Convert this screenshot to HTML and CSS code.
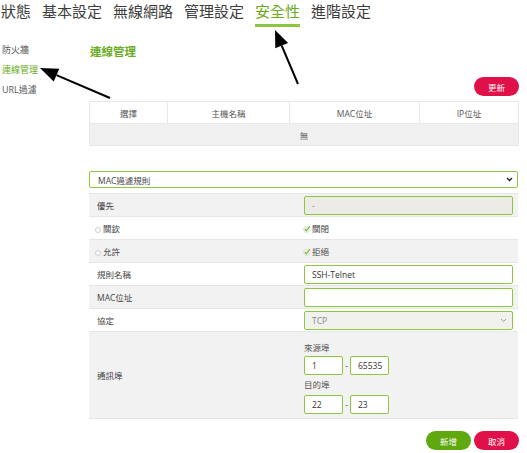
FILE: index.html
```html
<!DOCTYPE html>
<html lang="zh-Hant">
<head>
<meta charset="utf-8">
<title>連線管理</title>
<link rel="stylesheet" href="styles.css">
</head>
<body>
<div class="page">
  <nav class="topnav">
    <a class="nav-item">狀態</a>
    <a class="nav-item">基本設定</a>
    <a class="nav-item">無線網路</a>
    <a class="nav-item">管理設定</a>
    <a class="nav-item active">安全性</a>
    <a class="nav-item">進階設定</a>
  </nav>
  <div class="main">
    <aside class="sidebar">
      <div class="side-item">防火牆</div>
      <div class="side-item active">連線管理</div>
      <div class="side-item">URL過濾</div>
    </aside>
    <section class="content">
      <h2 class="title">連線管理</h2>
      <div class="toolbar"><button class="btn btn-red">更新</button></div>
      <table class="list">
        <colgroup><col class="c1"><col class="c2"><col class="c3"><col class="c4"></colgroup>
        <tr><th>選擇</th><th>主機名稱</th><th>MAC位址</th><th>IP位址</th></tr>
        <tr><td class="empty" colspan="4">無</td></tr>
      </table>
      <div class="select-box">
        <span>MAC過濾規則</span>
        <svg class="chev" width="7" height="5" viewBox="0 0 7 5"><path d="M1 1 L3.5 3.5 L6 1" fill="none" stroke="#222" stroke-width="1.4"/></svg>
      </div>
      <table class="form">
        <colgroup><col class="fl"><col class="fv"></colgroup>
        <tr class="g"><td class="lbl">優先</td><td class="val"><div class="field disabled">-</div></td></tr>
        <tr class="w"><td class="lbl rad"><span class="radio"></span>關欽</td><td class="val opt"><svg class="check" width="8" height="8" viewBox="0 0 8 8"><circle cx="3.6" cy="4.4" r="3.1" fill="#f0f0f0" stroke="#d4d4d4" stroke-width="0.6"/><path d="M1.8 4.2 L3.3 5.8 L6.8 1.2" fill="none" stroke="#7cbd2e" stroke-width="1.2"/></svg>關閉</td></tr>
        <tr class="g"><td class="lbl rad"><span class="radio"></span>允許</td><td class="val opt"><svg class="check" width="8" height="8" viewBox="0 0 8 8"><circle cx="3.6" cy="4.4" r="3.1" fill="#f0f0f0" stroke="#d4d4d4" stroke-width="0.6"/><path d="M1.8 4.2 L3.3 5.8 L6.8 1.2" fill="none" stroke="#7cbd2e" stroke-width="1.2"/></svg>拒絕</td></tr>
        <tr class="w"><td class="lbl">規則名稱</td><td class="val"><div class="field">SSH-Telnet</div></td></tr>
        <tr class="g"><td class="lbl">MAC位址</td><td class="val"><div class="field"></div></td></tr>
        <tr class="w"><td class="lbl">協定</td><td class="val"><div class="field disabled sel"><span>TCP</span><svg width="7" height="5" viewBox="0 0 7 5"><path d="M1 1 L3.5 3.5 L6 1" fill="none" stroke="#999" stroke-width="1"/></svg></div></td></tr>
        <tr class="g tall"><td class="lbl">通訊埠</td><td class="val">
          <div class="ports">
            <div class="port-label">來源埠</div>
            <div class="port-row"><div class="field port">1</div><span class="dash">-</span><div class="field port">65535</div></div>
            <div class="port-label second">目的埠</div>
            <div class="port-row"><div class="field port">22</div><span class="dash">-</span><div class="field port">23</div></div>
          </div>
        </td></tr>
      </table>
      <div class="actions">
        <button class="btn btn-green">新增</button>
        <button class="btn btn-red">取消</button>
      </div>
    </section>
  </div>
  <svg class="annot" width="527" height="453" viewBox="0 0 527 453">
    <line x1="56.5" y1="75.1" x2="110" y2="98" stroke="#000" stroke-width="2"/>
    <polygon points="40,68 59.3,68.7 53.7,81.5" fill="#000"/>
    <line x1="281.7" y1="45.6" x2="298" y2="84" stroke="#000" stroke-width="2"/>
    <polygon points="275,30 288.1,42.9 275.3,48.3" fill="#000"/>
  </svg>
</div>
</body>
</html>
```
FILE: styles.css
```css
* { box-sizing: border-box; }
body {
  margin: 0;
  font-family: "Open Sans", "Noto Sans CJK TC", sans-serif;
  color: #444;
  background: #fff;
}
.page {
  position: relative;
  width: 527px;
  height: 453px;
  overflow: hidden;
}
.topnav {
  display: flex;
  gap: 11px;
  padding-left: 1px;
  height: 27px;
}
.nav-item {
  font-size: 15px;
  line-height: 22px;
  padding-bottom: 2px;
  color: #3d3d3d;
  border-bottom: 3px solid transparent;
}
.nav-item.active {
  color: #6aab22;
  border-bottom-color: #8dc63f;
}
.main { display: flex; }
.sidebar {
  width: 89px;
  padding-top: 13px;
  padding-left: 2px;
  font-size: 9px;
  line-height: 20px;
  color: #555;
}
.side-item.active { color: #6aab22; }
.content {
  width: 429px;
  padding-top: 17px;
}
.title {
  margin: 0 0 17px 1px;
  font-size: 11.5px;
  line-height: 16px;
  font-weight: bold;
  color: #6aab22;
}
.toolbar {
  display: flex;
  justify-content: flex-end;
  margin-right: -1px;
  margin-bottom: 5px;
}
.btn {
  width: 45px;
  height: 19px;
  border: 0;
  border-radius: 10px;
  padding: 0;
  color: #fff;
  font-family: "Open Sans", "Noto Sans CJK TC", sans-serif;
  font-size: 8.5px;
}
.btn-red { background: #e01048; }
.btn-green { background: #5fa80f; }
.list {
  width: 429px;
  border-collapse: collapse;
  table-layout: fixed;
}
.list .c1 { width: 78px; }
.list .c2 { width: 122px; }
.list .c3 { width: 130px; }
.list .c4 { width: 99px; }
.list th {
  height: 22px;
  padding: 0;
  border: 1px solid #e8e8e8;
  background: #fff;
  font-weight: normal;
  font-size: 8.5px;
  color: #555;
}
.list td.empty {
  height: 22px;
  padding: 0;
  border: 1px solid #e8e8e8;
  background: #f0f0f0;
  text-align: center;
  font-size: 8.5px;
  color: #555;
}
.select-box {
  margin-top: 25px;
  height: 17px;
  border: 1px solid #8dc63f;
  border-radius: 2px;
  display: flex;
  align-items: center;
  justify-content: space-between;
  padding: 0 4px 0 8px;
  font-size: 8.5px;
  color: #444;
}
.form {
  margin-top: 5px;
  width: 429px;
  border-collapse: collapse;
  table-layout: fixed;
}
.form .fl { width: 214px; }
.form td {
  height: 23px;
  padding: 0;
  border-top: 1px solid #e6e6e6;
  font-size: 8.5px;
  color: #444;
}
.form tr.g td { background: #f2f2f2; }
.form tr.w td { background: #fff; }
.form tr:last-child td { border-bottom: 1px solid #e6e6e6; }
.form td.lbl { padding-left: 8px; }
.form td.lbl.rad { padding-left: 6px; }
.form td.val { padding: 0 5px 0 1px; }
.form td.opt { padding-left: 0; }
.radio {
  display: inline-block;
  width: 6px;
  height: 6px;
  border: 1px solid #cfcfcf;
  border-radius: 50%;
  background: #fff;
  margin-right: 2px;
  vertical-align: -0.5px;
}
.check {
  vertical-align: -1px;
  margin-right: 1px;
}
.field {
  height: 19px;
  border: 1px solid #8dc63f;
  border-radius: 2px;
  background: #fff;
  padding-left: 7px;
  display: flex;
  align-items: center;
  font-size: 8.5px;
  color: #333;
}
.field.disabled {
  background: #ecebe5;
  color: #888;
}
.field.sel {
  justify-content: space-between;
  padding-right: 5px;
  background: #f1f1ed;
}
.ports { padding: 10px 0 4px; }
.port-label {
  line-height: 12px;
  margin-bottom: 2px;
  color: #555;
}
.port-label.second {
  margin-top: 4px;
  margin-bottom: 4px;
}
.port-row {
  display: flex;
  align-items: center;
}
.field.port { width: 39px; }
.dash {
  width: 7px;
  text-align: center;
}
.actions {
  display: flex;
  justify-content: flex-end;
  gap: 3px;
  margin-top: 12px;
  margin-right: -1px;
}
.annot {
  position: absolute;
  left: 0;
  top: 0;
  pointer-events: none;
}
```
